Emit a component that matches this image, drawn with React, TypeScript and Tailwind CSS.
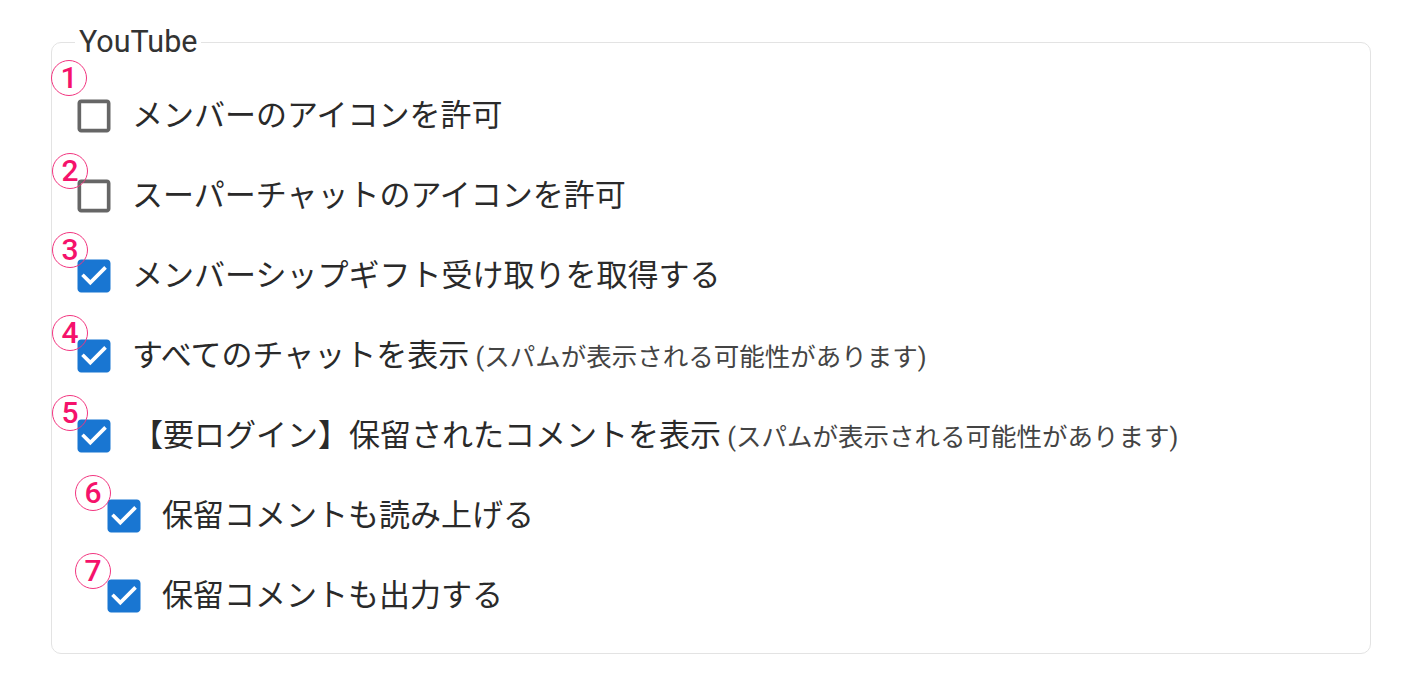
import React from "react";

const items = [
  { label: "メンバーのアイコンを許可", checked: false },
  { label: "スーパーチャットのアイコンを許可", checked: false },
  { label: "メンバーシップギフト受け取りを取得する", checked: true },
  { label: "すべてのチャットを表示", note: "(スパムが表示される可能性があります)", checked: true },
  { label: "【要ログイン】保留されたコメントを表示", note: "(スパムが表示される可能性があります)", checked: true },
  { label: "保留コメントも読み上げる", checked: true, nested: true },
  { label: "保留コメントも出力する", checked: true, nested: true },
];

// annotation circles placed over the screenshot
const marks = [
  { n: "1", cls: "left-[51px] top-[60px]" },
  { n: "2", cls: "left-[52px] top-[153px]" },
  { n: "3", cls: "left-[52px] top-[232px]" },
  { n: "4", cls: "left-[52px] top-[315px]" },
  { n: "5", cls: "left-[52px] top-[395px]" },
  { n: "6", cls: "left-[75px] top-[475px]" },
  { n: "7", cls: "left-[75px] top-[553px]" },
];

function CheckIcon({ checked }: { checked: boolean }) {
  return checked ? (
    <svg viewBox="0 0 24 24" className="w-[44px] h-[44px] shrink-0 fill-[#1976d2]">
      <path d="M19 3H5c-1.11 0-2 .9-2 2v14c0 1.1.89 2 2 2h14c1.11 0 2-.9 2-2V5c0-1.1-.89-2-2-2zm-9 14l-5-5 1.41-1.41L10 14.17l7.59-7.59L19 8l-9 9z" />
    </svg>
  ) : (
    <svg viewBox="0 0 24 24" className="w-[44px] h-[44px] shrink-0 fill-[#666666]">
      <path d="M19 5v14H5V5h14m0-2H5c-1.1 0-2 .9-2 2v14c0 1.1.9 2 2 2h14c1.1 0 2-.9 2-2V5c0-1.1-.9-2-2-2z" />
    </svg>
  );
}

export default function App() {
  return (
    <div
      className="relative w-[1420px] h-[680px] bg-white pt-[24px] pl-[51px]"
      style={{ fontFamily: "Roboto, 'Noto Sans CJK JP', sans-serif" }}
    >
      <fieldset className="w-[1320px] h-[630px] border border-[#e3e3e3] rounded-[10px]">
        <legend className="ml-[23px] px-[4px] text-[30.5px] leading-[36px] text-[#333333]">
          YouTube
        </legend>
        <div className="flex flex-col pt-[16px] pl-[20px]">
          {items.map((it, i) => (
            <div
              key={i}
              className={
                "flex items-center h-[80px] " + (it.nested ? "pl-[30px]" : "")
              }
            >
              <CheckIcon checked={it.checked} />
              <span className="ml-[16px] text-[31px] text-[#2a2a2a] whitespace-nowrap">
                {it.label}
                {it.note && (
                  <span className="text-[25.5px] text-[#444444]"> {it.note}</span>
                )}
              </span>
            </div>
          ))}
        </div>
      </fieldset>

      {marks.map((m) => (
        <div
          key={m.n}
          className={
            "absolute w-[36px] h-[36px] rounded-full border border-[#f2357f] flex items-center justify-center text-[30px] leading-none text-[#f5126b] font-medium " +
            m.cls
          }
        >
          {m.n}
        </div>
      ))}
    </div>
  );
}
